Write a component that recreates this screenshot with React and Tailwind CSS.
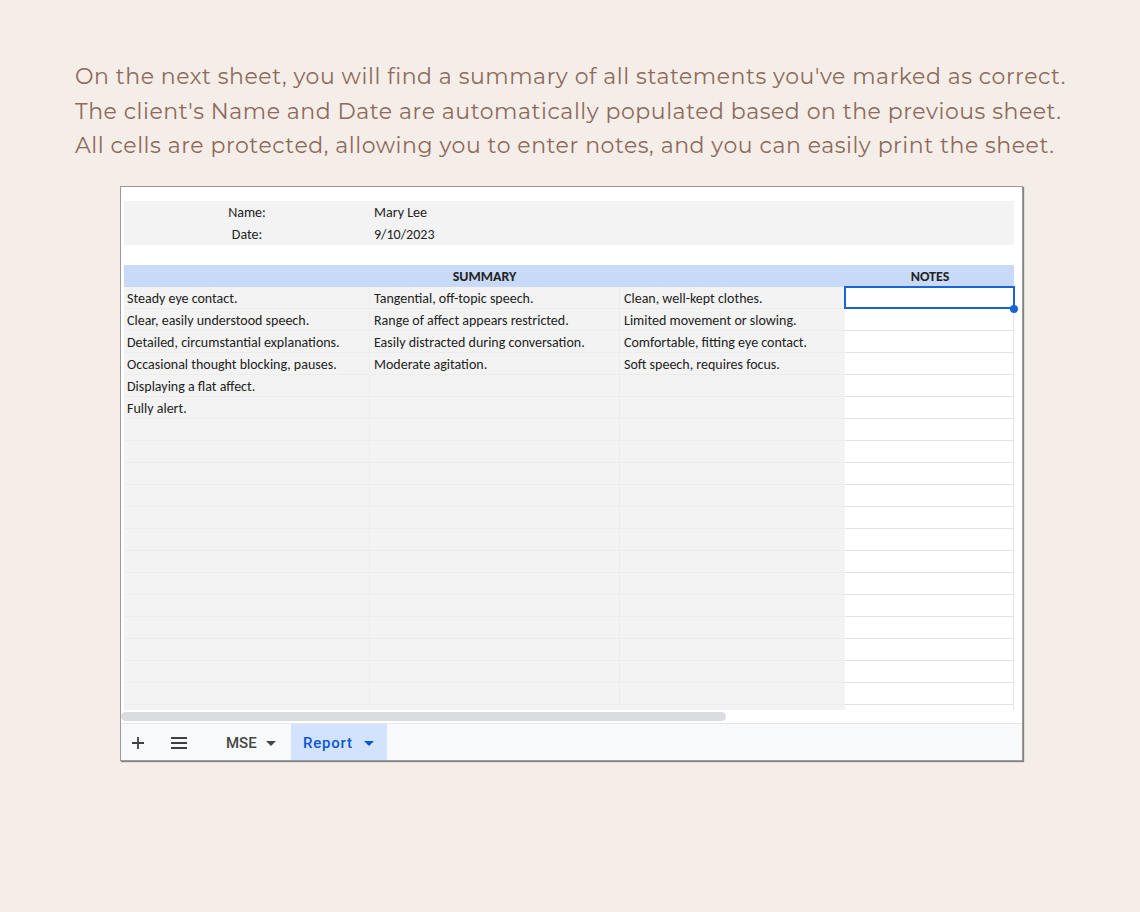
const rowsA = [
  "Steady eye contact.",
  "Clear, easily understood speech.",
  "Detailed, circumstantial explanations.",
  "Occasional thought blocking, pauses.",
  "Displaying a flat affect.",
  "Fully alert.",
];
const rowsB = [
  "Tangential, off-topic speech.",
  "Range of affect appears restricted.",
  "Easily distracted during conversation.",
  "Moderate agitation.",
];
const rowsC = [
  "Clean, well-kept clothes.",
  "Limited movement or slowing.",
  "Comfortable, fitting eye contact.",
  "Soft speech, requires focus.",
];

const cellFont = { fontFamily: "Carlito, Lato, 'Open Sans', sans-serif" };

const Row = ({ i }) => (
  <div className="flex h-[22px]">
    <div className="w-[246px] bg-[#f3f3f3] border-b border-r border-[#ececec] pl-[3px] pt-[2px] flex items-center truncate">
      {rowsA[i] || ""}
    </div>
    <div className="w-[250px] bg-[#f3f3f3] border-b border-r border-[#ececec] pl-[4px] pt-[2px] flex items-center truncate">
      {rowsB[i] || ""}
    </div>
    <div className="w-[225px] bg-[#f3f3f3] border-b border-[#ececec] pl-[4px] pt-[2px] flex items-center truncate">
      {rowsC[i] || ""}
    </div>
    <div className={"relative w-[169px] bg-white border-b border-r border-[#e3e3e3] " + (i === 0 ? "z-10" : "")}>
      {i === 0 && (
        <>
          <div className="absolute -left-px -top-px w-[171px] h-[23px] border-2 border-[#1a65d6]"></div>
          <div className="absolute -right-[5px] -bottom-[5px] w-[8px] h-[8px] rounded-full bg-[#1a65d6]"></div>
        </>
      )}
    </div>
  </div>
);

const App = () => {
  return (
    <div className="w-[1140px] h-[912px] bg-[#f5eee8] overflow-hidden">
      <div
        className="pt-[60px] pl-[75px] text-[22px] leading-[34.5px] text-[#8c6a5c] tracking-[0.55px]"
        style={{ fontFamily: "Montserrat, 'Open Sans', sans-serif" }}
      >
        <p>On the next sheet, you will find a summary of all statements you've marked as correct.</p>
        <p>The client's Name and Date are automatically populated based on the previous sheet.</p>
        <p>All cells are protected, allowing you to enter notes, and you can easily print the sheet.</p>
      </div>

      <div className="ml-[120px] mt-[22px] w-[903px] h-[575px] bg-white border border-[#9a9a9a] shadow-[1px_1px_1px_rgba(0,0,0,0.45)] flex flex-col">
        <div className="pt-[14px] pl-[3px] text-[14px] text-[#222]" style={cellFont}>
          <div className="w-[890px] bg-[#f3f3f3]">
            <div className="flex h-[22px] items-center pt-[2px]">
              <div className="w-[246px] text-center">Name:</div>
              <div className="pl-[4px]">Mary Lee</div>
            </div>
            <div className="flex h-[22px] items-center pt-[2px]">
              <div className="w-[246px] text-center">Date:</div>
              <div className="pl-[4px]">9/10/2023</div>
            </div>
          </div>
          <div className="h-[20px]"></div>
          <div className="flex h-[22px] w-[890px] bg-[#c9daf8] font-bold items-center pt-[2px]">
            <div className="w-[721px] text-center">SUMMARY</div>
            <div className="w-[169px] text-center pl-[1px]">NOTES</div>
          </div>
          {Array.from({ length: 19 }).map((_, i) => (
            <Row key={i} i={i} />
          ))}
          <div className="flex h-[5px]">
            <div className="w-[721px] bg-[#f3f3f3]"></div>
            <div className="w-[169px] bg-white border-r border-[#e3e3e3]"></div>
          </div>
        </div>
        <div className="h-[13px] flex items-center">
          <div className="w-[605px] h-[9px] rounded-full bg-[#dadce0]"></div>
        </div>
        <div
          className="flex-1 bg-[#f8f9fa] border-t border-[#e6e6e6] flex items-stretch text-[15px]"
          style={{ fontFamily: "Roboto, 'Noto Sans', sans-serif" }}
        >
          <div className="w-[33px] flex items-center justify-center pt-[2px]">
            <svg width="14" height="14" viewBox="0 0 14 14">
              <path d="M7 1v12M1 7h12" stroke="#3c4043" strokeWidth="1.8" />
            </svg>
          </div>
          <div className="w-[50px] flex items-center justify-center pt-[2px]">
            <svg width="16" height="12" viewBox="0 0 16 12">
              <path d="M0 1h16M0 6h16M0 11h16" stroke="#3c4043" strokeWidth="1.8" />
            </svg>
          </div>
          <div className="w-[87px] flex items-center pl-[22px] pt-[4px] gap-[9px] text-[#444746] font-medium">
            <span>MSE</span>
            <svg width="10" height="5" viewBox="0 0 10 5">
              <path d="M0 0h10L5 5z" fill="#444746" />
            </svg>
          </div>
          <div className="w-[96px] bg-[#d3e3fd] flex items-center pl-[12px] pt-[4px] gap-[11px] text-[#0b57d0] font-medium tracking-[0.8px]">
            <span>Report</span>
            <svg width="10" height="5" viewBox="0 0 10 5">
              <path d="M0 0h10L5 5z" fill="#0b57d0" />
            </svg>
          </div>
        </div>
      </div>
    </div>
  );
};

export default App;
